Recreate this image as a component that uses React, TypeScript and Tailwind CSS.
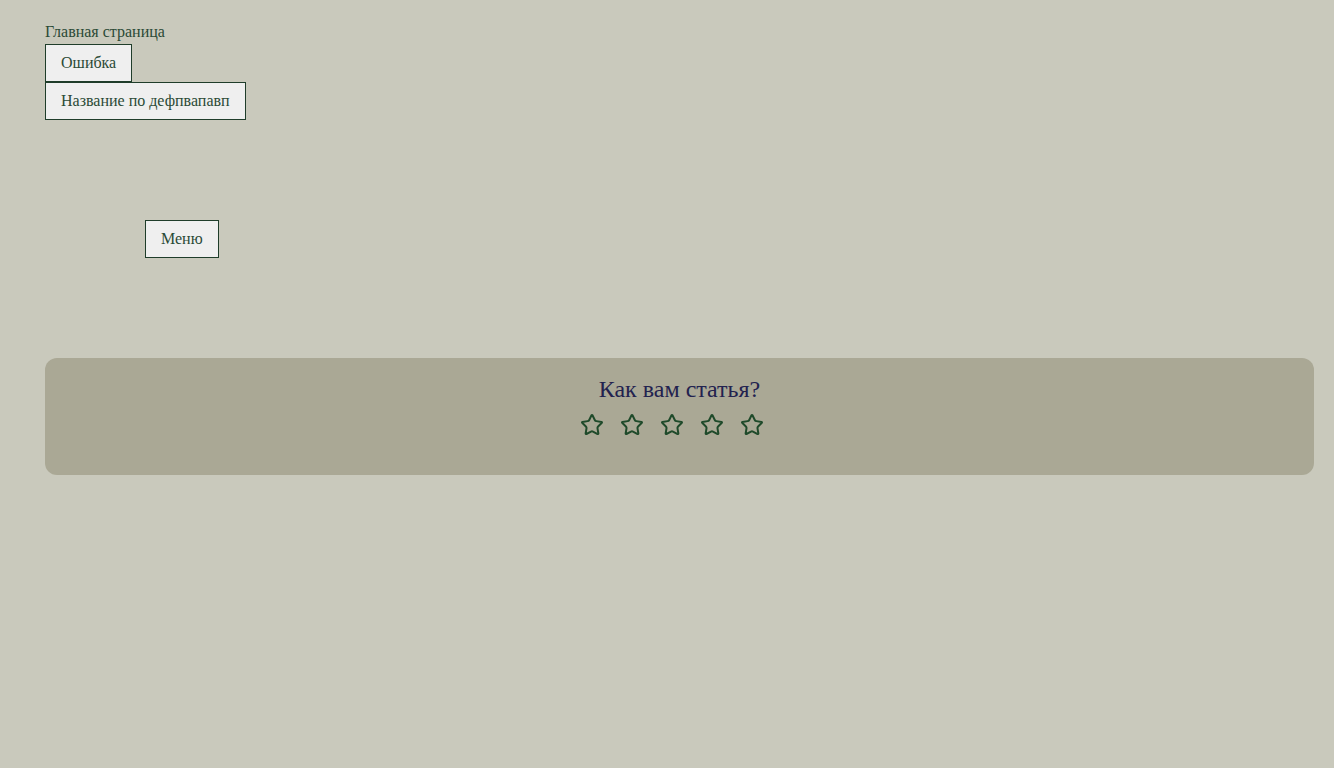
import React from "react";
import { Star } from "lucide-react";

const serif = "font-['Liberation_Serif',_'Times_New_Roman',_serif]";

const NavButton: React.FC<{ label: string }> = ({ label }) => (
  <button className="h-[38px] px-[15px] border border-[#1f3d2a] bg-[#efefef] text-[#2b4a36] text-base leading-none">
    {label}
  </button>
);

const App: React.FC = () => {
  return (
    <div className={`min-h-screen bg-[#c9c9bc] pl-[45px] pr-[20px] pt-[22px] ${serif}`}>
      {/* Header links */}
      <div className="text-[#2b4a36] text-base leading-[20px] h-[22px]">Главная страница</div>
      <div className="flex flex-col items-start">
        <NavButton label="Ошибка" />
        <NavButton label="Название по дефпвапавп" />
      </div>

      {/* Menu */}
      <div className="mt-[100px] ml-[100px]">
        <NavButton label="Меню" />
      </div>

      {/* Rating */}
      <div className="mt-[100px] h-[117px] rounded-[12px] bg-[#aaa895] pt-[17px] flex flex-col items-center">
        <h2 className="text-[24px] leading-[28px] text-[#22224f]">Как вам статья?</h2>
        <div className="flex mt-[10px]">
          {[0, 1, 2, 3, 4].map((i) => (
            <span key={i} className="mr-[16px] text-[#1f4a2a]">
              <Star size={24} strokeWidth={2} />
            </span>
          ))}
        </div>
      </div>
    </div>
  );
};

export default App;
